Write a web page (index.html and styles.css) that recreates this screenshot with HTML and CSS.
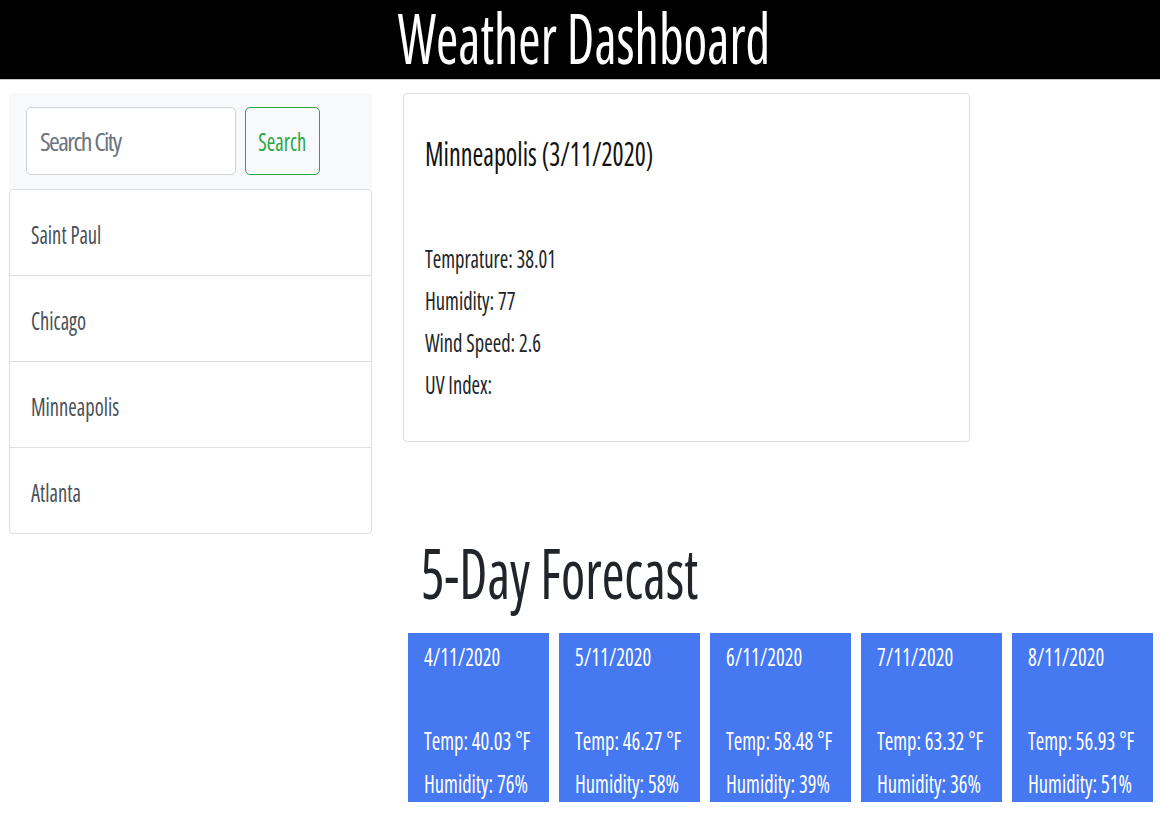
FILE: index.html
```html
<!DOCTYPE html>
<html lang="en">
<head>
<meta charset="utf-8">
<title>Weather Dashboard</title>
<link rel="stylesheet" href="styles.css">
</head>
<body>
<header class="top">
  <h1 class="brand"><span class="sq sq-h">Weather Dashboard</span></h1>
</header>
<div class="page">
  <aside class="side">
    <div class="search">
      <input class="city-input" type="text" placeholder="Search City">
      <button class="btn-search" type="button"><span class="sq sq-c">Search</span></button>
    </div>
    <ul class="cities">
      <li class="city"><span class="sq">Saint Paul</span></li>
      <li class="city"><span class="sq">Chicago</span></li>
      <li class="city"><span class="sq">Minneapolis</span></li>
      <li class="city"><span class="sq">Atlanta</span></li>
    </ul>
  </aside>
  <main class="main">
    <section class="current">
      <h2 class="cur-title"><span class="sq">Minneapolis (3/11/2020)</span></h2>
      <p class="cur-line"><span class="sq">Temprature: 38.01</span></p>
      <p class="cur-line"><span class="sq">Humidity: 77</span></p>
      <p class="cur-line"><span class="sq">Wind Speed: 2.6</span></p>
      <p class="cur-line"><span class="sq">UV Index:</span></p>
    </section>
    <h1 class="fc-title"><span class="sq sq-big">5-Day Forecast</span></h1>
    <div class="fc-row">
      <div class="fc-card">
        <p class="fc-date"><span class="sq">4/11/2020</span></p>
        <p class="fc-line fc-first"><span class="sq">Temp: 40.03 °F</span></p>
        <p class="fc-line"><span class="sq">Humidity: 76%</span></p>
      </div>
      <div class="fc-card">
        <p class="fc-date"><span class="sq">5/11/2020</span></p>
        <p class="fc-line fc-first"><span class="sq">Temp: 46.27 °F</span></p>
        <p class="fc-line"><span class="sq">Humidity: 58%</span></p>
      </div>
      <div class="fc-card">
        <p class="fc-date"><span class="sq">6/11/2020</span></p>
        <p class="fc-line fc-first"><span class="sq">Temp: 58.48 °F</span></p>
        <p class="fc-line"><span class="sq">Humidity: 39%</span></p>
      </div>
      <div class="fc-card">
        <p class="fc-date"><span class="sq">7/11/2020</span></p>
        <p class="fc-line fc-first"><span class="sq">Temp: 63.32 °F</span></p>
        <p class="fc-line"><span class="sq">Humidity: 36%</span></p>
      </div>
      <div class="fc-card">
        <p class="fc-date"><span class="sq">8/11/2020</span></p>
        <p class="fc-line fc-first"><span class="sq">Temp: 56.93 °F</span></p>
        <p class="fc-line"><span class="sq">Humidity: 51%</span></p>
      </div>
    </div>
  </main>
</div>
</body>
</html>
```
FILE: styles.css
```css
* { box-sizing: border-box; }

body {
  margin: 0;
  font-family: "Open Sans", "Noto Sans", sans-serif;
  font-stretch: 75%;
  color: #212529;
  background: #fff;
}

/* condensed lettering, as in the reference */
.sq {
  display: inline-block;
  white-space: nowrap;
  transform: scaleX(0.79);
  transform-origin: 0 50%;
}
.sq-c { transform-origin: 50% 50%; }
.sq-h { transform: scaleX(0.77); transform-origin: 50% 50%; }
.sq-big { transform: scaleX(0.785); }

/* header */
.top {
  height: 80px;
  background: #000;
  border-bottom: 1px solid #c8c8c8;
  text-align: center;
}
.brand {
  margin: 0;
  color: #fff;
  font-size: 70px;
  font-weight: 500;
  line-height: 74px;
  padding-left: 8px;
}

/* layout */
.page {
  display: flex;
  align-items: flex-start;
  gap: 31px;
  padding: 13px 0 0 9px;
}

/* sidebar */
.side {
  width: 363px;
  flex: none;
}
.search {
  background: #f8f9fa;
  display: flex;
  gap: 9px;
  padding: 14px 17px;
}
.city-input {
  width: 210px;
  height: 68px;
  border: 1px solid #ced4da;
  border-radius: 5px;
  padding: 0 13px;
  font-family: inherit;
  font-stretch: 75%;
  font-size: 26px;
  letter-spacing: -1.6px;
  color: #495057;
  background: #fff;
}
.city-input::placeholder { color: #6c757d; }
.btn-search {
  width: 75px;
  height: 68px;
  border: 1px solid #28a745;
  border-radius: 5px;
  background: transparent;
  color: #28a745;
  font-family: inherit;
  font-stretch: 75%;
  font-size: 26px;
  padding: 0;
}

.cities {
  list-style: none;
  margin: 0;
  padding: 0;
  border: 1px solid rgba(0,0,0,.125);
  border-radius: 4px;
}
.city {
  padding: 23px 21px 20px;
  font-size: 26px;
  line-height: 42px;
  color: #495057;
  border-top: 1px solid rgba(0,0,0,.125);
}
.city:first-child { border-top: 0; padding-top: 23px; }

/* main column */
.main {
  width: 752px;
  flex: none;
}
.current {
  width: 567px;
  border: 1px solid rgba(0,0,0,.125);
  border-radius: 4px;
  padding: 41px 21px 36px;
}
.cur-title {
  margin: 0 0 64px;
  font-size: 33px;
  font-weight: 500;
  line-height: 38px;
  color: #111;
}
.cur-line {
  margin: 0;
  font-size: 26px;
  line-height: 42px;
}

.fc-title {
  margin: 88px 0 19px 18px;
  font-size: 70px;
  font-weight: 500;
  line-height: 84px;
}

.fc-row {
  display: flex;
  gap: 10px;
  padding-left: 5px;
}
.fc-card {
  width: 141px;
  height: 169px;
  background: #4678f2;
  color: #fff;
  padding: 8px 16px 0;
}
.fc-card p { margin: 0; font-size: 26px; }
.fc-date { line-height: 30px; }
.fc-line { line-height: 43px; }
.fc-first { margin-top: 48px !important; }
```
